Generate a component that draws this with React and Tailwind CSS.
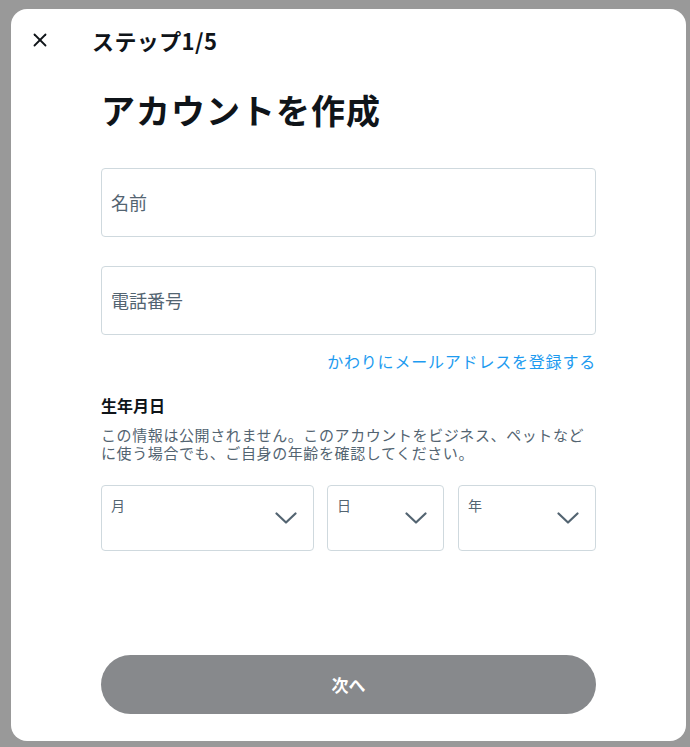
import { X } from 'lucide-react';

const jp = { fontFamily: '"Noto Sans CJK JP", "Noto Sans", sans-serif' };

const Chevron = () => (
  <svg width="22" height="12" viewBox="0 0 22 12" fill="none" className="text-[#536471]">
    <path d="M1.5 1.5 L11 10.5 L20.5 1.5" stroke="currentColor" strokeWidth="2.2" strokeLinecap="round" strokeLinejoin="round" />
  </svg>
);

const SelectBox = ({ label, width }) => (
  <div className={`relative h-[66px] ${width} rounded-[4px] border border-[#cfd9de] bg-white`}>
    <span className="absolute left-[9px] top-[9px] text-[14px] leading-[20px] text-[#536471]">{label}</span>
    <span className="absolute right-[16px] top-[26px]">
      <Chevron />
    </span>
  </div>
);

const TextInput = ({ placeholder }) => (
  <div className="flex h-[69px] items-center rounded-[4px] border border-[#cfd9de] px-[9px]">
    <span className="text-[18px] text-[#536471]">{placeholder}</span>
  </div>
);

const App = () => {
  return (
    <div className="min-h-[747px] bg-[#999999] pt-[9px] pl-[11px]" style={jp}>
      <div className="flex h-[732px] w-[675px] flex-col rounded-[16px] bg-white">
        <div className="flex items-center pl-[11px] pt-[13px]">
          <button className="flex h-9 w-9 items-center justify-center text-[#0f1419]">
            <X size={22} strokeWidth={2} />
          </button>
          <h2 className="ml-[34px] text-[22px] font-bold leading-[28px] tracking-[0.4px] text-[#0f1419]">ステップ1/5</h2>
        </div>

        <div className="mx-auto flex w-[495px] flex-1 flex-col">
          <h1 className="mt-[31px] text-[34px] font-bold leading-[42px] tracking-[1px] text-[#0f1419]">アカウントを作成</h1>

          <div className="mt-[37px] flex flex-col gap-[29px]">
            <TextInput placeholder="名前" />
            <TextInput placeholder="電話番号" />
          </div>

          <div className="mt-[14px] text-right">
            <span className="text-[16px] leading-[24px] tracking-[0.8px] text-[#1d9bf0]">かわりにメールアドレスを登録する</span>
          </div>

          <div className="mt-[22px] text-[16px] font-bold leading-[20px] text-[#0f1419]">生年月日</div>
          <div className="mt-[11px] text-[15px] tracking-[0.6px] text-[#536471]">
            <div className="leading-[18px]">この情報は公開されません。このアカウントをビジネス、ペットなど</div>
            <div className="leading-[18px]">に使う場合でも、ご自身の年齢を確認してください。</div>
          </div>

          <div className="mt-[23px] flex">
            <SelectBox label="月" width="w-[213px]" />
            <div className="ml-[13px]">
              <SelectBox label="日" width="w-[117px]" />
            </div>
            <div className="ml-[14px]">
              <SelectBox label="年" width="w-[138px]" />
            </div>
          </div>

          <button className="mt-auto mb-[27px] h-[59px] w-full rounded-full bg-[#87898c] text-[17px] font-bold text-white">
            次へ
          </button>
        </div>
      </div>
    </div>
  );
};

export default App;
